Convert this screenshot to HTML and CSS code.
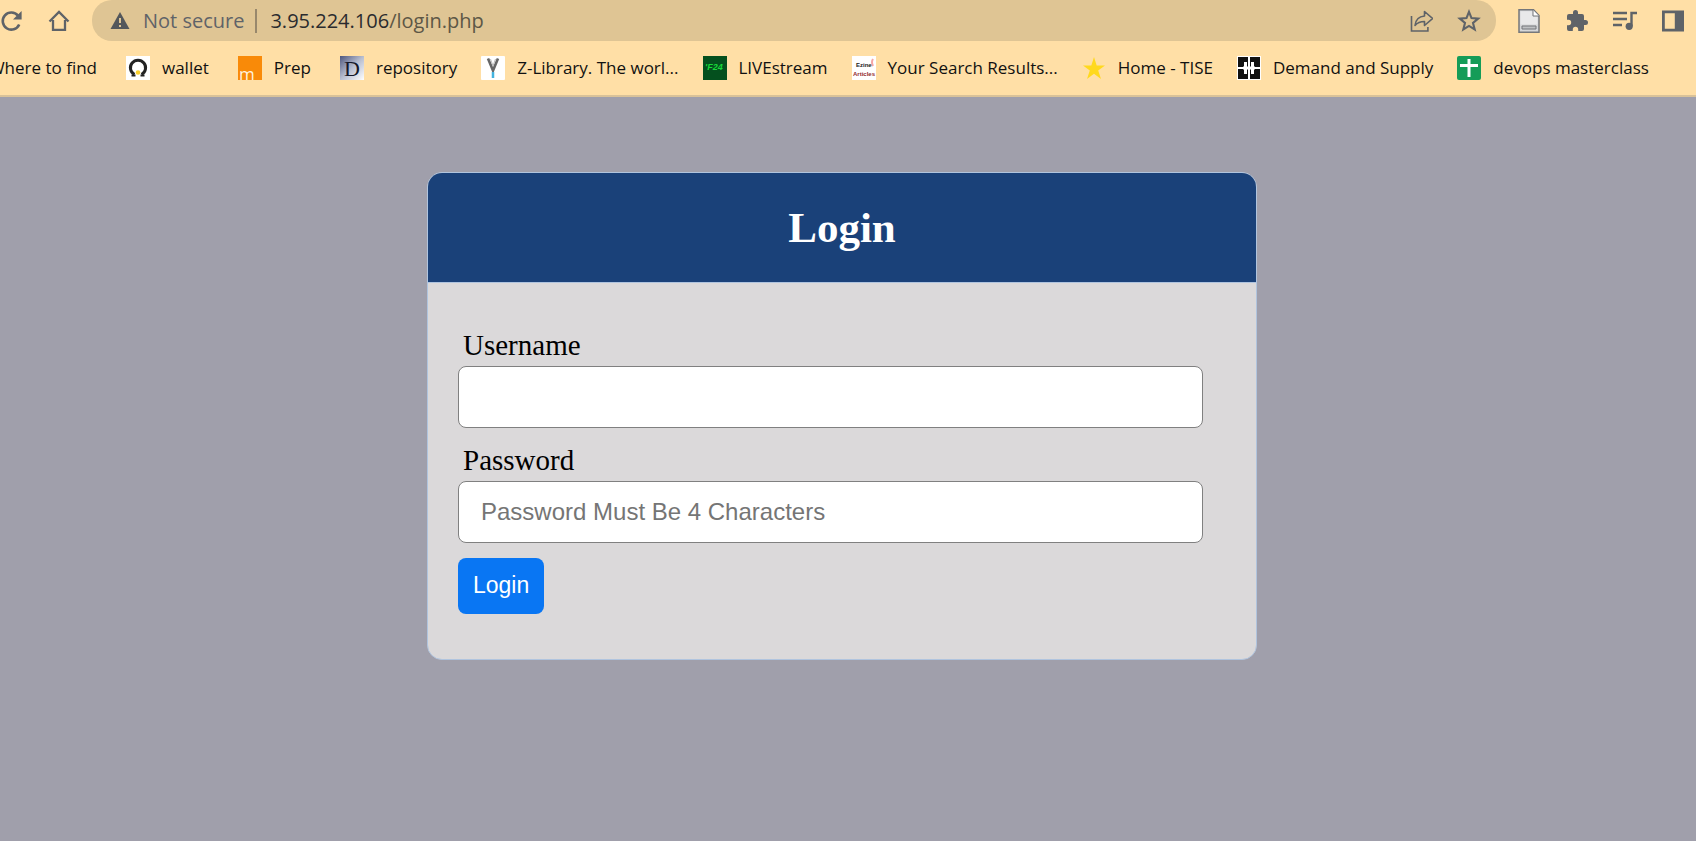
FILE: index.html
```
<!DOCTYPE html>
<html lang="en">
<head>
<meta charset="utf-8">
<title>Login</title>
<link rel="stylesheet" href="styles.css">
</head>
<body>
<header class="browser">
  <div class="toolbar">
    <button class="tool" aria-label="Reload"><svg width="24" height="24" viewBox="0 0 24 24"><path d="M19.2 15.5A8.6 8.6 0 1 1 18 6.6" fill="none" stroke="#5f6368" stroke-width="2.6"/><path d="M21.6 2v8.6H13z" fill="#5f6368"/></svg></button>
    <button class="tool" aria-label="Home"><svg width="24" height="24" viewBox="0 0 24 24"><path d="M2.500 12.500 12 3l9.500 9.500M6 11v9.800h12V11" fill="none" stroke="#5f6368" stroke-width="2.300"/></svg></button>
    <div class="address">
      <svg width="20" height="18" viewBox="0 0 20 18"><path d="M10 0 19.500 17H.5z" fill="#53575b"/><path d="M10 6v5M10 13v2" stroke="#dfc594" stroke-width="2"/></svg>
      <span class="security">Not secure</span>
      <span class="divider"></span>
      <span class="url">3.95.224.106<span class="path">/login.php</span></span>
      <span class="address-actions">
        <button class="tool" aria-label="Share"><svg width="24" height="24" viewBox="0 0 24 24"><path d="M2.500 7v15h16.400V18" fill="none" stroke="#5f6368" stroke-width="1.600"/><path d="M15.500 2.500 23.500 9.500l-8 7v-4c-4 0-7 1-9.500 4 .5-5 3.500-9 9.500-9.500z" fill="none" stroke="#5f6368" stroke-width="1.600" stroke-linejoin="round"/></svg></button>
        <button class="tool" aria-label="Bookmark this page"><svg width="24" height="24" viewBox="0 0 24 24"><path d="m12 2.800 2.500 6.300 6.700.5-5.200 4.300 1.700 6.600-5.700-3.600-5.700 3.600L8 13.900 2.800 9.600l6.700-.5z" fill="none" stroke="#5f6368" stroke-width="2.100"/></svg></button>
      </span>
    </div>
    <nav class="extensions">
      <button class="tool" aria-label="Document"><svg width="24" height="24" viewBox="0 0 24 24"><path d="M2 .8h14.500L22 6.500v16.700H2z" fill="#d5d6d8" stroke="#75777a" stroke-width="1.500"/><path d="M3.500 2.300h12v5.200h5v8h-17z" fill="#e9e9ea"/><path d="M16 1v6h6" fill="#fff" stroke="#75777a"/><path d="M5 17h14v3H5z" fill="#bfc1c3" stroke="#75777a"/></svg></button>
      <button class="tool" aria-label="Extensions"><svg width="24" height="24" viewBox="0 0 24 24"><path d="M20.500 11H19V7a2 2 0 0 0-2-2h-4V3.500a2.500 2.500 0 0 0-5 0V5H4a2 2 0 0 0-2 2v3.800h1.500a2.700 2.700 0 0 1 0 5.400H2V20a2 2 0 0 0 2 2h3.800v-1.500a2.700 2.700 0 0 1 5.400 0V22H17a2 2 0 0 0 2-2v-4h1.500a2.500 2.500 0 0 0 0-5z" fill="#5f6368"/></svg></button>
      <button class="tool" aria-label="Media controls"><svg width="24" height="24" viewBox="0 0 24 24"><path d="M0 4h14M0 10h14M0 16h9M18.500 17V4H24" fill="none" stroke="#5f6368" stroke-width="2.400"/><circle cx="16.200" cy="17.300" r="3.600" fill="#5f6368"/></svg></button>
      <button class="tool" aria-label="Side panel"><svg width="24" height="24" viewBox="0 0 24 24"><path d="M1 1.500h22v21H1z M3.800 4.300v15.400h10V4.300z" fill="#5f6368" fill-rule="evenodd"/></svg></button>
    </nav>
  </div>
  <nav class="bookmarks">
    <a class="bookmark clipped spaced" href="#">Where to find</a>
    <a class="bookmark spaced" href="#"><svg width="24" height="24" viewBox="0 0 24 24"><path d="M0 0h24v24H0z" fill="#fff"/><path d="M8.500 18.500a7.600 7.600 0 1 1 7 0" fill="none" stroke="#222" stroke-width="3"/><path d="M5.500 19.500h4M14.500 19.500h4" stroke="#222" stroke-width="2"/><circle cx="12" cy="16.500" r="2.300" fill="#fbd02c"/></svg>wallet</a>
    <a class="bookmark spaced" href="#"><svg width="24" height="24" viewBox="0 0 24 24"><path d="M0 0h24v24H0z" fill="#f98a08"/><text x="1" y="24" class="icon-light">m</text></svg>Prep</a>
    <a class="bookmark" href="#"><svg width="24" height="24" viewBox="0 0 24 24"><defs><linearGradient id="d" x2="1" y2="1"><stop stop-color="#4d567d"/><stop offset=".5" stop-color="#b8bed0"/><stop offset="1" stop-color="#fff"/></linearGradient></defs><path d="M0 0h24v24H0z" fill="url(#d)"/><text x="4" y="20" class="icon-serif">D</text></svg>repository</a>
    <a class="bookmark" href="#"><svg width="24" height="24" viewBox="0 0 24 24"><rect width="24" height="24" rx="1" fill="#fff"/><path d="m7 2.500 5 12 5-12" fill="none" stroke="#666" stroke-width="2.600"/><path d="m9.500 3 2.500 7 2.500-7" fill="none" stroke="#bbb"/><path d="M12 16v6" stroke="#43b3df" stroke-width="2.500"/></svg>Z-Library. The worl...</a>
    <a class="bookmark" href="#"><svg width="24" height="24" viewBox="0 0 24 24"><path d="M0 0h24v24H0z" fill="#04501e"/><text x="2" y="14" class="icon-green">'F24</text></svg>LIVEstream</a>
    <a class="bookmark" href="#"><svg width="24" height="24" viewBox="0 0 24 24"><path d="M0 0h24v24H0z" fill="#fff"/><path d="M21 3q-2 3 0 7" fill="none" stroke="#f6a5a5" stroke-width="2"/><text x="4" y="11" class="icon-dark">Ezine</text><text x="1" y="20" class="icon-red">Articles</text></svg>Your Search Results...</a>
    <a class="bookmark" href="#"><svg width="24" height="24" viewBox="0 0 24 24"><path d="m12 1 2.700 8.500H23l-6.800 5L19 23l-7-5.200L5 23l2.800-8.500L1 9.500h8.300z" fill="#ffd91e"/></svg>Home - TISE</a>
    <a class="bookmark" href="#"><svg width="24" height="24" viewBox="0 0 24 24"><path d="M0 0h24v24H0z" fill="#fff"/><path d="M1 1h10v10H1zM13 1h10v10H13zM1 13h10v10H1zM13 13h10v10H13z" fill="#111"/><path d="M8.500 6v12M15.500 6v12M6 12h12" stroke="#fff" stroke-width="3"/></svg>Demand and Supply</a>
    <a class="bookmark" href="#"><svg width="24" height="24" viewBox="0 0 24 24"><rect width="24" height="24" rx="2" fill="#159c58"/><path d="M3 9.500h18M12 3v18" stroke="#fff" stroke-width="3"/></svg>devops masterclass</a>
  </nav>
</header>
<main class="page">
  <section class="card">
    <h1 class="card-title">Login</h1>
    <form class="card-body">
      <div class="field"><label for="username">Username</label><input id="username" type="text"></div>
      <div class="field"><label for="password">Password</label><input id="password" type="password" placeholder="Password Must Be 4 Characters"></div>
      <button class="submit" type="button">Login</button>
    </form>
  </section>
</main>
</body>
</html>
```

FILE: styles.css
```
* { box-sizing: border-box; }
body {
  margin: 0;
  min-height: 100vh;
  background: #a09fab;
  font-family: "Liberation Serif", "Times New Roman", serif;
  overflow-x: hidden;
}
svg { display: block; flex: none; }
.browser {
  background: #ffdfa6;
  border-bottom: 2px solid #d9c299;
  font-family: "Open Sans", "Noto Sans", sans-serif;
}
.toolbar { display: flex; align-items: center; height: 41px; padding-right: 11px; }
.tool { padding: 0; border: 0; background: none; }
.toolbar > .tool { margin-right: 23px; }
.toolbar > .tool + .tool { margin-right: 21px; }
.address {
  flex: 1;
  display: flex;
  align-items: center;
  height: 41px;
  padding: 0 15px 0 18px;
  border-radius: 20px;
  background: #dfc594;
  font-size: 20px;
  white-space: nowrap;
}
.security { margin-left: 13px; color: #5f6368; }
.divider { width: 2px; height: 24px; margin: 0 13px 0 11px; background: #98886c; }
.url { color: #2a2b2e; }
.path { color: #5d5746; }
.address-actions { display: flex; gap: 24px; margin-left: auto; }
.extensions { display: flex; gap: 24px; margin-left: 21px; }
.bookmarks {
  display: flex;
  align-items: center;
  gap: 24px;
  height: 54px;
  font-size: 17px;
  line-height: 22px;
  white-space: nowrap;
  overflow: hidden;
}
.bookmark { display: flex; flex: none; align-items: center; gap: 12px; color: #111; text-decoration: none; }
.spaced { margin-right: 5px; }
.clipped { width: 97px; justify-content: flex-end; overflow: hidden; }
.icon-light { font: 17px "Open Sans", sans-serif; fill: #fff3df; }
.icon-serif { font: 22px "Liberation Serif", serif; fill: #151829; }
.icon-green { font: italic bold 9px "Liberation Sans", sans-serif; fill: #18d838; }
.icon-dark { font: bold 6px "Liberation Sans", sans-serif; fill: #222; }
.icon-red { font: bold 6px "Liberation Sans", sans-serif; fill: #922b2f; }
.page { padding: 75px 12px 75px 0; }
.card {
  width: 830px;
  max-width: 100%;
  margin: 0 auto;
  border: 1px solid #b0c4de;
  border-radius: 15px;
  background: #dbd9da;
  overflow: hidden;
}
.card-title {
  margin: 0;
  padding: 30px;
  border-bottom: 1px solid #b0c4de;
  background: #1a4179;
  color: #fff;
  font-size: 43px;
  line-height: 49px;
  text-align: center;
}
.card-body { padding: 45px 30px; }
.field { margin-bottom: 15px; }
.field label { display: block; margin: 0 5px 4px; font-size: 29px; line-height: 34px; }
.field input {
  display: block;
  width: 97%;
  height: 62px;
  padding: 0 22px;
  border: 1px solid #808080;
  border-radius: 8px;
  background: #fff;
  font: 24px "Liberation Sans", Arial, sans-serif;
}
.field input::placeholder { color: #757575; }
.submit {
  display: block;
  height: 56px;
  padding: 0 15px 2px;
  border: 0;
  border-radius: 8px;
  background: #0976f3;
  color: #fff;
  font: 23px "Liberation Sans", Arial, sans-serif;
}
```
